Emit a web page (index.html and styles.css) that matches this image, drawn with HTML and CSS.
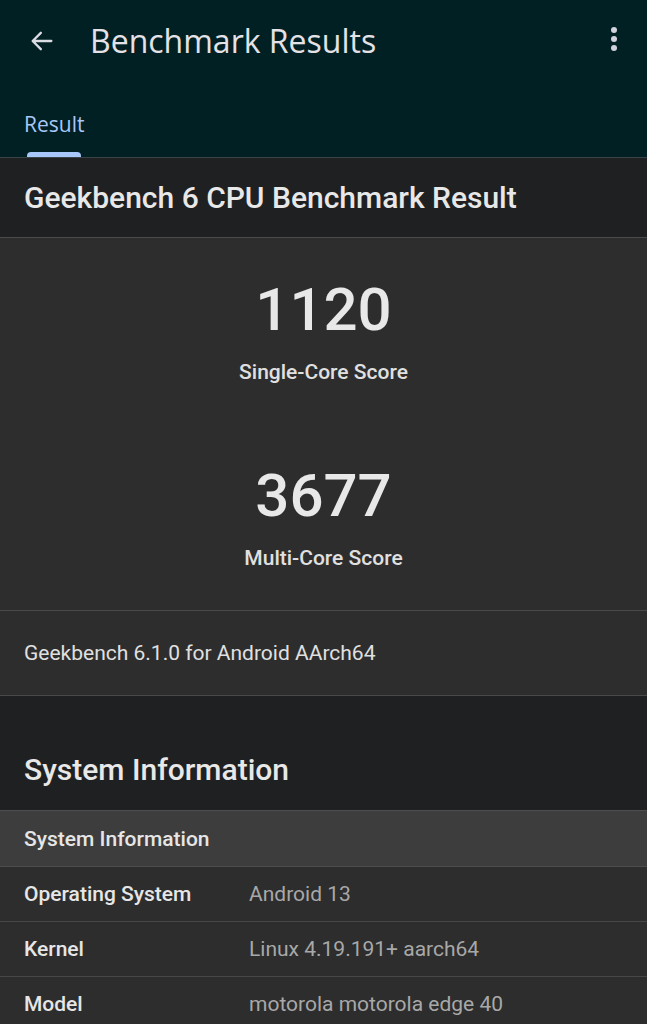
FILE: index.html
```html
<!DOCTYPE html>
<html lang="en">
<head>
<meta charset="UTF-8" />
<meta name="viewport" content="width=device-width, initial-scale=1" />
<title>Benchmark Results</title>
<link rel="stylesheet" href="styles.css">
</head>
<body>
  <div class="appbar">
    <div class="toolbar">
      <svg class="icon back" viewBox="0 0 24 24" width="28" height="28">
        <path d="M20 12H5M11 5l-7 7 7 7" fill="none" stroke="#dcdce4" stroke-width="2" stroke-linecap="round" stroke-linejoin="round"/>
      </svg>
      <div class="title">Benchmark Results</div>
      <svg class="icon more" viewBox="0 0 8 26" width="8" height="26">
        <circle cx="4" cy="4" r="3" fill="#d2d2dc"/>
        <circle cx="4" cy="13" r="3" fill="#d2d2dc"/>
        <circle cx="4" cy="22" r="3" fill="#d2d2dc"/>
      </svg>
    </div>
    <div class="tabs">
      <div class="tab active">Result</div>
    </div>
  </div>

  <div class="section-head">Geekbench 6 CPU Benchmark Result</div>

  <div class="scores">
    <div class="score">
      <div class="value">1120</div>
      <div class="label">Single-Core Score</div>
    </div>
    <div class="score">
      <div class="value">3677</div>
      <div class="label">Multi-Core Score</div>
    </div>
  </div>

  <div class="version">Geekbench 6.1.0 for Android AArch64</div>

  <div class="section-title">System Information</div>

  <div class="table">
    <div class="table-head">System Information</div>
    <div class="row">
      <div class="key">Operating System</div>
      <div class="val">Android 13</div>
    </div>
    <div class="row">
      <div class="key">Kernel</div>
      <div class="val">Linux 4.19.191+ aarch64</div>
    </div>
    <div class="row">
      <div class="key">Model</div>
      <div class="val">motorola motorola edge 40</div>
    </div>
  </div>
</body>
</html>
```

FILE: styles.css
```css
body {
  margin: 0;
  font-family: Roboto, "Noto Sans", sans-serif;
  background: #1f2022;
  color: #e6e6e6;
  height: 1024px;
  overflow: hidden;
}

.appbar {
  background: #012023;
  border-bottom: 1px solid #3a4446;
}

.toolbar {
  display: flex;
  align-items: center;
  height: 82px;
  padding: 0 29px 0 28px;
}

.icon.more {
  margin-top: -4px;
}

.back {
  margin-right: 34px;
}

.title {
  flex: 1;
  font-family: "Open Sans", sans-serif;
  font-size: 32px;
  color: #e4e2e6;
  margin-top: -2px;
}

.tabs {
  display: flex;
  height: 75px;
  padding-left: 24px;
}

.tab {
  position: relative;
  font-family: "Open Sans", sans-serif;
  font-size: 21px;
  color: #a8c7fa;
  padding-top: 28px;
}

.tab.active::after {
  content: "";
  position: absolute;
  left: 3px;
  right: 3px;
  bottom: 0;
  height: 5px;
  border-radius: 4px 4px 0 0;
  background: #a8c7fa;
}

.section-head {
  height: 79px;
  display: flex;
  align-items: center;
  padding-left: 24px;
  font-size: 30px;
  font-weight: 500;
  color: #e8e8e8;
  background: #1f2022;
  border-bottom: 1px solid #4a4a4a;
}

.scores {
  background: #2d2d2d;
  padding: 42px 0 40px;
  display: flex;
  flex-direction: column;
  gap: 82px;
  border-bottom: 1px solid #4a4a4a;
}

.score {
  text-align: center;
}

.score .value {
  font-size: 60px;
  font-weight: 500;
  line-height: 60px;
  color: #e8e8e8;
}

.score .label {
  margin-top: 20px;
  font-size: 21px;
  font-weight: 500;
  color: #e0e0e0;
}

.version {
  background: #2d2d2d;
  height: 84px;
  display: flex;
  align-items: center;
  padding-left: 24px;
  font-size: 21px;
  color: #e0e0e0;
  border-bottom: 1px solid #4a4a4a;
}

.section-title {
  height: 115px;
  box-sizing: border-box;
  padding: 56px 0 0 24px;
  font-size: 30px;
  font-weight: 500;
  line-height: 36px;
  color: #e8e8e8;
  border-bottom: 1px solid #4e4e4e;
}

.table-head {
  background: #3d3d3d;
  height: 55px;
  display: flex;
  align-items: center;
  padding-left: 24px;
  font-size: 21px;
  font-weight: 500;
  color: #e6e6e6;
  border-bottom: 1px solid #4e4e4e;
}

.row {
  background: #2d2d2d;
  height: 54px;
  display: flex;
  align-items: center;
  padding-left: 24px;
  font-size: 21px;
  border-bottom: 1px solid #474747;
}

.key {
  width: 225px;
  font-weight: 500;
  color: #e6e6e6;
}

.val {
  color: #a8a8a8;
}
```
